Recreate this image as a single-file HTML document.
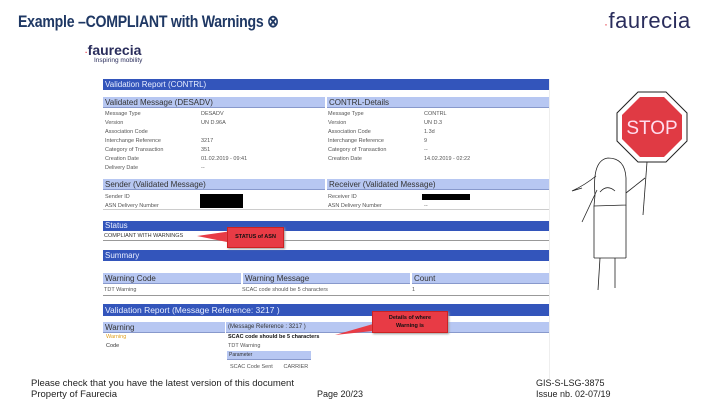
<!DOCTYPE html>
<html><head><meta charset="utf-8"><style>
*{margin:0;padding:0;box-sizing:border-box}
body{width:720px;height:405px;background:#fff;position:relative;overflow:hidden;font-family:"Liberation Sans",sans-serif}
.a{position:absolute;white-space:nowrap}
.bar{position:absolute;background:#3355bb;color:#e8eeff;font-size:8px;line-height:11px;padding-left:2px}
.lh{position:absolute;background:#b7c7f2;color:#333;font-size:8px;line-height:11px;padding-left:2px;border-bottom:1px solid #8899cc}
.t{position:absolute;font-size:5.5px;color:#555;white-space:nowrap}
.call{position:absolute;background:#e83b45;border:1px solid #c22;box-shadow:1px 1px 2px #999;color:#111;font-weight:bold;font-size:5.5px;text-align:center}
.ln{position:absolute;height:1px;background:#ccc}
</style></head><body>
<div class="a" style="left:18px;top:12px;font-size:17px;font-weight:bold;color:#1f3864;letter-spacing:-0.3px;transform:scaleX(0.83);transform-origin:0 0">Example –COMPLIANT with Warnings ⊗</div>
<div class="a" style="left:604px;top:8px;font-size:22px;color:#2a2d5c;letter-spacing:0.5px"><span style="color:#e83b45;font-size:12px">·</span>faurecia</div>
<div class="a" style="left:85px;top:42px;font-size:14px;color:#2a2d5c;font-weight:bold"><span style="color:#e83b45;font-size:8px">·</span>faurecia</div>
<div class="a" style="left:94px;top:57px;font-size:6.5px;color:#2a2d5c">Inspiring mobility</div>

<div style="position:absolute;left:549px;top:79px;width:1px;height:300px;background:#eee"></div>
<div class="bar" style="left:103px;top:79px;width:446px;height:11px">Validation Report (CONTRL)</div>
<div class="lh" style="left:103px;top:97px;width:222px;height:11px">Validated Message (DESADV)</div>
<div class="lh" style="left:327px;top:97px;width:222px;height:11px">CONTRL-Details</div>
<div class="t" style="left:105px;top:110px;line-height:9px">Message Type<br>Version<br>Association Code<br>Interchange Reference<br>Category of Transaction<br>Creation Date<br>Delivery Date</div>
<div class="t" style="left:201px;top:110px;line-height:9px">DESADV<br>UN D.96A<br>&nbsp;<br>3217<br>351<br>01.02.2019 - 09:41<br>--</div>
<div class="t" style="left:328px;top:110px;line-height:9px">Message Type<br>Version<br>Association Code<br>Interchange Reference<br>Category of Transaction<br>Creation Date</div>
<div class="t" style="left:424px;top:110px;line-height:9px">CONTRL<br>UN D.3<br>1.3d<br>9<br>--<br>14.02.2019 - 02:22</div>
<div class="lh" style="left:103px;top:179px;width:222px;height:11px">Sender (Validated Message)</div>
<div class="lh" style="left:327px;top:179px;width:222px;height:11px">Receiver (Validated Message)</div>
<div class="t" style="left:105px;top:193px;line-height:9px">Sender ID<br>ASN Delivery Number</div>
<div class="t" style="left:328px;top:193px;line-height:9px">Receiver ID<br>ASN Delivery Number</div>
<div class="t" style="left:424px;top:193px;line-height:9px">&nbsp;<br>--</div>
<div style="position:absolute;left:200px;top:194px;width:43px;height:14px;background:#000"></div>
<div style="position:absolute;left:422px;top:194px;width:48px;height:6px;background:#000"></div>
<div class="ln" style="left:103px;top:209px;width:446px"></div>

<div class="bar" style="left:103px;top:221px;width:446px;height:10px;line-height:10px">Status</div>
<div class="t" style="left:104px;top:233px;color:#333">COMPLIANT WITH WARNINGS</div>
<div class="ln" style="left:103px;top:240px;width:446px;background:#999"></div>
<div class="bar" style="left:103px;top:250px;width:446px;height:11px">Summary</div>
<div class="lh" style="left:103px;top:273px;width:138px;height:11px">Warning Code</div>
<div class="lh" style="left:243px;top:273px;width:167px;height:11px">Warning Message</div>
<div class="lh" style="left:412px;top:273px;width:137px;height:11px">Count</div>
<div class="t" style="left:104px;top:287px">TDT Warning</div>
<div class="t" style="left:242px;top:287px">SCAC code should be 5 characters</div>
<div class="t" style="left:412px;top:287px">1</div>
<div class="ln" style="left:103px;top:295px;width:446px;background:#999"></div>
<div class="bar" style="left:103px;top:304px;width:446px;height:12px;line-height:12px;font-size:8.5px">Validation Report (Message Reference: 3217 )</div>
<div class="lh" style="left:103px;top:322px;width:122px;height:11px">Warning</div>
<div class="lh" style="left:226px;top:322px;width:323px;height:11px;font-size:6px">(Message Reference : 3217 )</div>
<div class="t" style="left:106px;top:334px;color:#e0a020">Warning</div>
<div class="t" style="left:106px;top:343px;color:#333">Code</div>
<div class="t" style="left:228px;top:334px;color:#111;font-weight:bold">SCAC code should be 5 characters</div>
<div class="t" style="left:228px;top:343px">TDT Warning</div>
<div class="lh" style="left:227px;top:351px;width:84px;height:9px;font-size:5px;line-height:9px">Parameter</div>
<div class="t" style="left:230px;top:364px">SCAC Code Sent &nbsp;&nbsp;&nbsp;&nbsp;&nbsp; CARRIER</div>

<svg style="position:absolute;left:0;top:0" width="720" height="405">
<polygon points="197,236 232,231 232,243" fill="#e83b45"/>
<polygon points="335,335 380,322 382,330" fill="#e83b45"/>
<g transform="translate(652,127)">
<polygon points="-14,-35 14,-35 35,-14 35,14 14,35 -14,35 -35,14 -35,-14" fill="#fff" stroke="#222" stroke-width="1"/>
<polygon points="-12,-30 12,-30 30,-12 30,12 12,30 -12,30 -30,12 -30,-12" fill="#e03a44"/>
<text x="0" y="7" font-size="19" fill="#fde" text-anchor="middle" font-family="Liberation Sans">STOP</text>
</g>
<g stroke="#222" stroke-width="0.8" fill="none">
<line x1="647" y1="162" x2="643" y2="215"/>
<path d="M595 195 Q592 160 608 158 Q625 158 626 178 L626 205 L594 206 Z"/>
<path d="M596 176 Q585 185 572 191 L582 188"/>
<path d="M597 190 L582 222"/>
<path d="M626 193 L645 178"/>
<path d="M600 192 Q607 184 615 191"/>
<line x1="594" y1="206" x2="594" y2="258"/><line x1="626" y1="205" x2="626" y2="258"/>
<line x1="594" y1="258" x2="626" y2="258"/>
<line x1="600" y1="258" x2="598" y2="290"/><line x1="615" y1="258" x2="615" y2="288"/>
</g>
</svg>
<div class="call" style="left:227px;top:227px;width:57px;height:21px;line-height:19px">STATUS of ASN</div>
<div class="call" style="left:372px;top:311px;width:76px;height:22px;line-height:8px;padding-top:2px">Details of where<br>Warning is</div>

<div class="a" style="left:31px;top:378px;font-size:9.5px;color:#222;line-height:11px">Please check that you have the latest version of this document<br>Property of Faurecia</div>
<div class="a" style="left:317px;top:389px;font-size:9px;color:#222">Page 20/23</div>
<div class="a" style="left:536px;top:378px;font-size:9px;color:#222;line-height:11px">GIS-S-LSG-3875<br>Issue nb. 02-07/19</div>
</body></html>
